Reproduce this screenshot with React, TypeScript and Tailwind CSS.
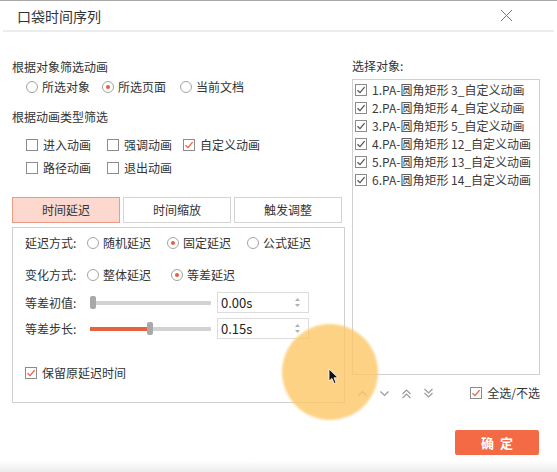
import React from 'react';

const FONT = { fontFamily: '"Noto Sans CJK SC", "Noto Sans", sans-serif' };

const Radio = ({ checked }: { checked?: boolean }) => (
  <span className="w-[12px] h-[12px] rounded-full border border-[#a3a3a3] bg-white flex items-center justify-center shrink-0">
    {checked && <span className="w-[4px] h-[4px] rounded-full bg-[#e8603c]" />}
  </span>
);

const Check = ({ checked, dark }: { checked?: boolean; dark?: boolean }) => (
  <span className="w-[12px] h-[12px] border border-[#8c8c8c] bg-white flex items-center justify-center shrink-0">
    {checked && (
      <svg width="10" height="10" viewBox="0 0 10 10">
        <path d="M1.5 5.2 L4 7.6 L8.6 2.2" fill="none" stroke={dark ? '#555' : '#e8603c'} strokeWidth="1.3" />
      </svg>
    )}
  </span>
);

const RadioItem = ({ label, checked, className = '' }: { label: string; checked?: boolean; className?: string }) => (
  <div className={`flex items-center gap-[4px] ${className}`}>
    <Radio checked={checked} />
    <span>{label}</span>
  </div>
);

const CheckItem = ({ label, checked, className = '' }: { label: string; checked?: boolean; className?: string }) => (
  <div className={`flex items-center gap-[5px] ${className}`}>
    <Check checked={checked} />
    <span>{label}</span>
  </div>
);

const Spin = () => (
  <div className="flex flex-col items-center gap-[3px] mr-[8px]">
    <svg width="5" height="3" viewBox="0 0 5 3"><path d="M0 3 L2.5 0 L5 3Z" fill="#b0b0b0" /></svg>
    <svg width="5" height="3" viewBox="0 0 5 3"><path d="M0 0 L2.5 3 L5 0Z" fill="#b0b0b0" /></svg>
  </div>
);

const SliderRow = ({ label, value, fill }: { label: string; value: string; fill: number }) => (
  <div className="flex items-center h-[21px]">
    <span className="w-[65px]">{label}</span>
    <div className="relative w-[121px] h-[4px] bg-[#d2d2d2]">
      <div className="absolute left-0 top-0 h-[4px] bg-[#e5623d]" style={{ width: fill }} />
      <div className="absolute top-[-5px] w-[6px] h-[13px] rounded-[2px] bg-[#a8a8a8]" style={{ left: fill }} />
    </div>
    <div className="ml-[6px] w-[92px] h-[21px] border border-[#dcdcdc] flex items-center justify-between pl-[3px]">
      <span className="text-[13px] text-[#222]">{value}</span>
      <Spin />
    </div>
  </div>
);

const items = [
  '1.PA-圆角矩形 3_自定义动画',
  '2.PA-圆角矩形 4_自定义动画',
  '3.PA-圆角矩形 5_自定义动画',
  '4.PA-圆角矩形 12_自定义动画',
  '5.PA-圆角矩形 13_自定义动画',
  '6.PA-圆角矩形 14_自定义动画',
];

const Chevron = ({ d }: { d: string }) => (
  <svg width="11" height="11" viewBox="0 0 11 11">
    <path d={d} fill="none" stroke="#9a9a9a" strokeWidth="1.2" />
  </svg>
);

export default function App() {
  return (
    <div className="relative w-[557px] h-[472px] bg-white overflow-hidden flex flex-col text-[12px] leading-[18px] text-[#333]" style={FONT}>
      {/* title bar */}
      <div className="border-t border-[#a9a9a9] h-[30px] flex items-center justify-between pl-[17px] pr-[44px]">
        <span className="text-[14px] text-[#333]">口袋时间序列</span>
        <svg width="13" height="13" viewBox="0 0 13 13">
          <path d="M1 1 L12 12 M12 1 L1 12" stroke="#777" strokeWidth="1" />
        </svg>
      </div>
      <div className="mx-[3px] h-[2px] bg-[#ececec]" />

      <div className="flex">
        {/* left column */}
        <div className="w-[345px] pl-[12px] pt-[26px]">
          <div>根据对象筛选动画</div>
          <div className="flex items-center h-[18px] mt-[2px] pl-[14px]">
            <RadioItem label="所选对象" />
            <RadioItem label="所选页面" checked className="ml-[12px]" />
            <RadioItem label="当前文档" className="ml-[14px]" />
          </div>
          <div className="mt-[12px]">根据动画类型筛选</div>
          <div className="flex items-center h-[18px] mt-[10px] pl-[14px]">
            <CheckItem label="进入动画" className="w-[81px]" />
            <CheckItem label="强调动画" className="w-[76px]" />
            <CheckItem label="自定义动画" checked />
          </div>
          <div className="flex items-center h-[18px] mt-[5px] pl-[14px]">
            <CheckItem label="路径动画" className="w-[81px]" />
            <CheckItem label="退出动画" />
          </div>

          {/* tabs */}
          <div className="flex mt-[20px] h-[26px] gap-[3px]">
            <div className="w-[108px] border border-[#eb9a85] bg-[#fcd8ce] flex items-center justify-center">时间延迟</div>
            <div className="w-[108px] border border-[#d4d4d4] flex items-center justify-center">时间缩放</div>
            <div className="w-[108px] border border-[#d4d4d4] flex items-center justify-center">触发调整</div>
          </div>

          {/* panel */}
          <div className="mt-[4px] w-[333px] h-[176px] border border-[#cfcfcf] pl-[12px] pt-[6px]">
            <div className="flex items-center h-[18px]">
              <span className="w-[62px]">延迟方式:</span>
              <RadioItem label="随机延迟" />
              <RadioItem label="固定延迟" checked className="ml-[16px]" />
              <RadioItem label="公式延迟" className="ml-[16px]" />
            </div>
            <div className="flex items-center h-[18px] mt-[14px]">
              <span className="w-[62px]">变化方式:</span>
              <RadioItem label="整体延迟" />
              <RadioItem label="等差延迟" checked className="ml-[20px]" />
            </div>
            <div className="mt-[8px]">
              <SliderRow label="等差初值:" value="0.00s" fill={0} />
            </div>
            <div className="mt-[5px]">
              <SliderRow label="等差步长:" value="0.15s" fill={57} />
            </div>
            <CheckItem label="保留原延迟时间" checked className="mt-[25px] h-[18px]" />
          </div>
        </div>

        {/* right column */}
        <div className="ml-[7px] w-[188px] pt-[25px]">
          <div>选择对象:</div>
          <div className="mt-[4px] h-[296px] border border-[#cfcfcf] pt-[1px] pl-[2px]">
            {items.map((t) => (
              <div key={t} className="flex items-center gap-[5px] h-[18px]">
                <Check checked dark />
                <span className="text-[#3a3a3a]">{t}</span>
              </div>
            ))}
          </div>
          <div className="flex items-center justify-between h-[18px] mt-[9px]">
            <div className="flex items-center gap-[11px] pl-[5px]">
              <Chevron d="M1.5 7.5 L5.5 3.5 L9.5 7.5" />
              <Chevron d="M1.5 3.5 L5.5 7.5 L9.5 3.5" />
              <Chevron d="M1.5 6 L5.5 2 L9.5 6 M1.5 10 L5.5 6 L9.5 10" />
              <Chevron d="M1.5 1 L5.5 5 L9.5 1 M1.5 5 L5.5 9 L9.5 5" />
            </div>
            <CheckItem label="全选/不选" checked />
          </div>
        </div>
      </div>

      {/* footer */}
      <div className="flex justify-end pr-[18px] mt-[27px]">
        <button className="w-[84px] h-[25px] bg-[#f36a45] rounded-[2px] text-white font-bold text-[13px] tracking-[6px] pl-[6px]">
          确定
        </button>
      </div>
      <div className="flex-1 mt-[6px] bg-gradient-to-b from-white to-[#ececec]" />

      {/* highlight circle + cursor */}
      <div className="absolute left-[282px] top-[324px] w-[96px] h-[96px] rounded-full bg-[#fcc766]/80 blur-[1px]" />
      <svg className="absolute left-[328px] top-[368px]" width="11" height="17" viewBox="0 0 11 17">
        <path d="M1 1 L1 13 L4 10.5 L6.2 15.5 L8 14.7 L6 9.8 L10 9.8 Z" fill="#111" stroke="#fff" strokeWidth="0.8" />
      </svg>
    </div>
  );
}
